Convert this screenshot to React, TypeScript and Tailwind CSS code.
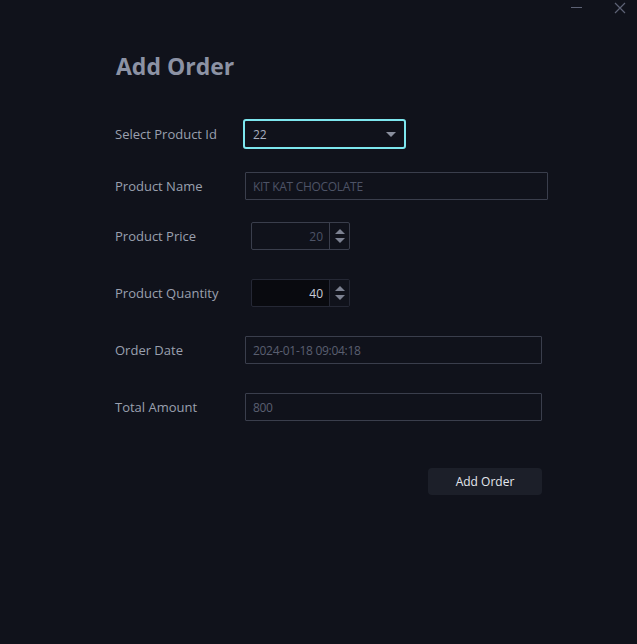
const font = { fontFamily: '"Open Sans", "Noto Sans", sans-serif' };

function Label({ children }: { children: React.ReactNode }) {
  return <div className="w-[128px] shrink-0 pt-[2px] text-[13px] text-[#9aa0af]">{children}</div>;
}

function Spin({ value, active }: { value: string; active?: boolean }) {
  return (
    <div
      className={
        "ml-[8px] flex h-[28px] w-[99px] rounded-[2px] border " +
        (active ? "border-[#252835] bg-[#090a0f]" : "border-[#3a3e4c] bg-[#10121b]")
      }
    >
      <div
        className={
          "flex flex-1 items-center justify-end pr-[6px] pt-[1px] text-[12px] " +
          (active ? "text-[#c9cdd8]" : "text-[#4d5366]")
        }
      >
        {value}
      </div>
      <div
        className={
          "flex w-[20px] flex-col items-center justify-center gap-[4px] border-l " +
          (active ? "border-[#252835] bg-[#10121b]" : "border-[#3a3e4c]")
        }
      >
        <div className="h-0 w-0 border-x-[5px] border-b-[5px] border-x-transparent border-b-[#7c8191]" />
        <div className="h-0 w-0 border-x-[5px] border-t-[5px] border-x-transparent border-t-[#7c8191]" />
      </div>
    </div>
  );
}

function Field({ value, width, tone = "text-[#4d5366]" }: { value: string; width: string; tone?: string }) {
  return (
    <div
      className={
        "ml-[2px] flex h-[28px] items-center rounded-[1px] border border-[#3a3e4c] px-[7px] pt-[1px] text-[12px] tracking-[-0.3px] " +
        width +
        " " +
        tone
      }
    >
      {value}
    </div>
  );
}

export default function App() {
  return (
    <div className="h-[644px] w-[637px] overflow-hidden bg-[#10121b]" style={font}>
      <div className="flex h-[16px] items-center justify-end pr-[11px]">
        <div className="mr-[32px] mt-[-2px] h-[1px] w-[11px] bg-[#5d6275]" />
        <svg width="12" height="12" viewBox="0 0 12 12" className="mt-[-1px]">
          <path d="M1 1 L11 11 M11 1 L1 11" stroke="#5d6275" strokeWidth="1.2" />
        </svg>
      </div>

      <div className="flex flex-col pl-[115px]">
        <h1 className="mt-[34px] pl-[1px] text-[23px] font-bold leading-[32px] text-[#8c92a4]">Add Order</h1>

        <div className="mt-[37px] flex h-[30px] items-center">
          <Label>Select Product Id</Label>
          <div className="flex h-[30px] w-[163px] items-center justify-between rounded-[3px] border-2 border-[#7de6ee] bg-[#10121b] pl-[8px] pr-[8px] pt-[1px] text-[12px] text-[#a9afbf]">
            <span>22</span>
            <div className="h-0 w-0 border-x-[5px] border-t-[5px] border-x-transparent border-t-[#8a8f9e]" />
          </div>
        </div>

        <div className="mt-[23px] flex h-[28px] items-center">
          <Label>Product Name</Label>
          <Field value="KIT KAT CHOCOLATE" width="w-[303px]" />
        </div>

        <div className="mt-[22px] flex h-[28px] items-center">
          <Label>Product Price</Label>
          <Spin value="20" />
        </div>

        <div className="mt-[29px] flex h-[28px] items-center">
          <Label>Product Quantity</Label>
          <Spin value="40" active />
        </div>

        <div className="mt-[29px] flex h-[28px] items-center">
          <Label>Order Date</Label>
          <Field value="2024-01-18 09:04:18" width="w-[297px]" tone="text-[#5a5f70]" />
        </div>

        <div className="mt-[29px] flex h-[28px] items-center">
          <Label>Total Amount</Label>
          <Field value="800" width="w-[297px]" tone="text-[#5a5f70]" />
        </div>

        <div className="mt-[47px] flex">
          <button className="ml-[313px] h-[27px] w-[114px] rounded-[4px] bg-[#1c1f29] text-[12px] text-[#e4e7ee]">
            Add Order
          </button>
        </div>
      </div>
    </div>
  );
}
